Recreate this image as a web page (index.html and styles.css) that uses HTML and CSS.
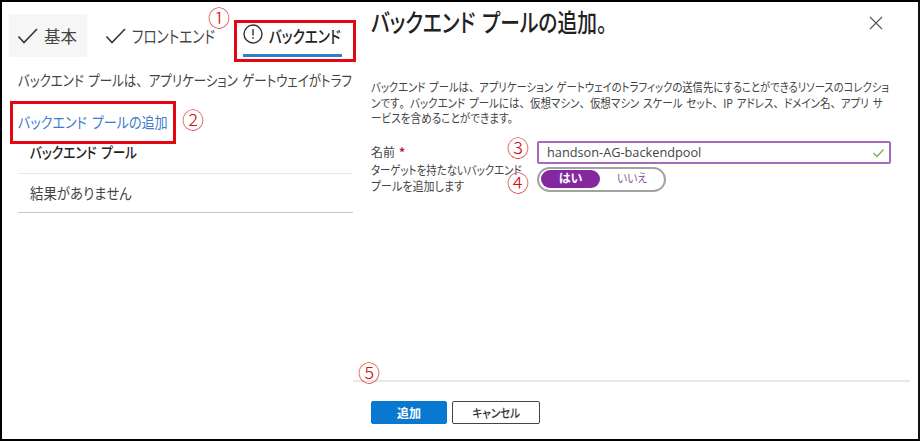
FILE: index.html
```html
<!DOCTYPE html>
<html lang="ja">
<head>
<meta charset="utf-8">
<title>バックエンド プールの追加</title>
<link rel="stylesheet" href="styles.css">
</head>
<body>
<main class="frame">
  <section class="wizard">
    <nav class="tabs">
      <a class="tab tab-basic"><svg class="tick" viewBox="0 0 22 18"><path d="M1.5 9.5 7 15.5 20 2"/></svg><span class="t t-basic">基本</span></a>
      <a class="tab tab-front"><svg class="tick" viewBox="0 0 22 18"><path d="M1.5 9.5 7 15.5 20 2"/></svg><span class="t t-front">フロントエンド</span></a>
      <a class="tab tab-back"><svg class="alert" viewBox="0 0 20 20"><circle cx="10" cy="10" r="9"/><path d="M10 5v6.5M10 13v1.8"/></svg><span class="t t-back">バックエンド</span></a>
    </nav>
    <p class="intro"><span class="t t-intro">バックエンド プールは<i>、</i>アプリケーション ゲートウェイがトラフ</span></p>
    <a class="add-link"><span class="t t-link">バックエンド プールの追加</span></a>
    <div class="row head"><span class="t t-head">バックエンド プール</span></div>
    <div class="row empty"><span class="t t-empty">結果がありません</span></div>
  </section>
  <section class="panel">
    <header class="panel-head">
      <h1><span class="t t-title">バックエンド プールの追加。</span></h1>
      <svg class="close" viewBox="0 0 14 14"><path d="M1 1 13 13M13 1 1 13"/></svg>
    </header>
    <div class="help">
      <div><span class="t t-h1">バックエンド プールは<i>、</i>アプリケーション ゲートウェイのトラフィックの送信先にすることができるリソースのコレクショ</span></div>
      <div><span class="t t-h2">ンです<i>。</i>バックエンド プールには<i>、</i>仮想マシン<i>、</i>仮想マシン スケール セット<i>、</i>IP アドレス<i>、</i>ドメイン名<i>、</i>アプリ サ</span></div>
      <div><span class="t t-h3">ービスを含めることができます。</span></div>
    </div>
    <div class="form">
      <div class="labels">
        <div class="name-label"><span class="t t-name">名前</span><b class="req">*</b></div>
        <div class="target-label"><div><span class="t t-l1">ターゲットを持たないバックエンド</span></div><div><span class="t t-l2">プールを追加します</span></div></div>
      </div>
      <div class="fields">
        <div class="input"><span class="t t-input">handson-AG-backendpool</span><svg class="valid" viewBox="0 0 12 10"><path d="M1 5 4.5 8.5 11 1.5"/></svg></div>
        <div class="toggle"><span class="on"><span class="t t-yes">はい</span></span><span class="off"><span class="t t-no">いいえ</span></span></div>
      </div>
    </div>
    <footer class="actions">
      <button class="primary"><span class="t t-add">追加</span></button>
      <button class="secondary"><span class="t t-cancel">キャンセル</span></button>
    </footer>
  </section>
  <div class="mark mark-tab"></div>
  <div class="mark mark-link"></div>
  <span class="num n1">①</span><span class="num n2">②</span><span class="num n3">③</span><span class="num n4">④</span><span class="num n5">⑤</span>
</main>
</body>
</html>
```
FILE: styles.css
```css
* { box-sizing: border-box; }
body { margin: 0; background: #fff; color: #444; font-family: "Noto Sans CJK JP", sans-serif; font-feature-settings: "palt"; }
.frame { position: relative; display: grid; grid-template-columns: 351px minmax(0, 1fr); width: 920px; height: 441px; border: 2px solid #000; border-right-color: #111; overflow: hidden; }
h1, p { margin: 0; font-weight: inherit; font-size: inherit; }
i { font-style: normal; font-feature-settings: normal; }
svg { display: block; fill: none; flex: none; }

/* Condensed text, one ratio per string */
.t { display: inline-block; white-space: pre; word-spacing: .14em; transform-origin: 0 50%; }
.t-basic { transform: scaleX(.97); }
.t-front { transform: scaleX(.8); }
.t-back { transform: scaleX(.8); }
.t-intro { transform: scaleX(.832); }
.t-link { transform: scaleX(.872); }
.t-head { transform: scaleX(.842); }
.t-empty { transform: scaleX(.895); }
.t-title { transform: scaleX(.79); }
.t-h1 { transform: scaleX(.861); }
.t-h2 { transform: scaleX(.874); }
.t-h3 { transform: scaleX(.885); }
.t-l1 { transform: scaleX(.868); }
.t-l2 { transform: scaleX(.92); }
.t-input { transform: scaleX(.98); }
.t-no { transform: scaleX(.9); }
.t-cancel { transform: scaleX(.88); transform-origin: 50% 50%; }

.wizard { overflow: hidden; padding: 12px 0 0 7px; }
.tabs { display: flex; height: 43px; font-size: 17px; line-height: 43px; }
.tab { display: flex; align-items: center; height: 43px; }
.tab-basic { width: 78px; padding-left: 8px; background: #f6f6f6; }
.tab-front { width: 138px; padding-left: 18px; }
.tab-back { width: 99px; height: 43px; border-bottom: 3px solid #2b7fcc; color: #222; margin-left: 18px; font-weight: 500; }
.tick { width: 22px; height: 18px; margin-right: 5px; stroke: #3b3a39; stroke-width: 1.7; }
.alert { width: 20px; height: 20px; margin-right: 6px; stroke: #333; stroke-width: 1.4; }
.t-back { padding-top: 2px; }
.intro { height: 26px; margin: 10px 0 0 9px; font-size: 15px; line-height: 26px; }
.add-link { display: block; height: 26px; margin: 16px 0 0 9px; font-size: 15px; line-height: 26px; color: #3d7dcb; }
.row { margin-left: 9px; padding-left: 12px; font-size: 15px; }
.head { height: 39px; line-height: 34px; border-bottom: 1px solid #e8e8e8; color: #222; font-weight: 500; }
.empty { height: 39px; line-height: 38px; border-bottom: 1px solid #c8c8c8; }

.panel { display: flex; flex-direction: column; padding-left: 18px; }
.panel-head { display: flex; justify-content: space-between; height: 77px; }
.panel-head h1 { font-size: 25px; line-height: 39px; font-weight: 500; color: #222; }
.close { width: 14px; height: 14px; margin: 14px 35px 0 0; stroke: #555; stroke-width: 1.1; }
.help { font-size: 12px; line-height: 15.5px; height: 62px; }
.form { display: flex; height: 239px; font-size: 12px; }
.labels { width: 166px; }
.name-label { display: flex; height: 21px; line-height: 22px; }
.req { color: #a4262c; margin-left: 4px; }
.target-label { line-height: 15.5px; }
.input { display: flex; align-items: center; justify-content: space-between; width: 354px; height: 23px; padding: 0 4px 2px 8px; border: 2px solid #a56bba; border-radius: 2px; font: 13px "Open Sans", sans-serif; }
.valid { width: 13px; height: 10px; stroke: #74b04c; stroke-width: 1.3; margin-top: 2px; }
.toggle { display: flex; width: 129px; height: 25px; margin-top: 3px; padding: 1px 2px; border: 2px solid #a3a3a3; border-radius: 13px; line-height: 16px; }
.on { width: 59px; height: 18px; border-radius: 9px; background: #8428a0; color: #fff; text-align: center; font-weight: 700; }
.off { padding-left: 17px; color: #8a5aa3; }
.actions { display: flex; gap: 5px; margin-left: -18px; margin-right: 8px; padding: 19px 0 0 18px; border-top: 2px solid #e8e8e8; }
button { display: block; height: 23px; padding: 0; border-radius: 2px; font: 500 12px/20px "Noto Sans CJK JP", sans-serif; font-feature-settings: "palt"; text-align: center; }
.primary { width: 76px; border: 1px solid #0878d0; background: #0878d0; color: #fff; font-weight: 700; }
.secondary { width: 88px; border: 1px solid #444; background: #fff; color: #333; }

.mark { position: absolute; border: 3px solid #e30613; }
.mark-tab { left: 232px; top: 18px; width: 122px; height: 42px; }
.mark-link { left: 8px; top: 99px; width: 166px; height: 43px; }
.num { position: absolute; color: #d40f14; font-size: 22px; line-height: 24px; font-feature-settings: normal; font-weight: 300; }
.n1 { left: 206px; top: 2px; }
.n2 { left: 180px; top: 104px; }
.n3 { left: 505px; top: 132px; }
.n4 { left: 505px; top: 167px; }
.n5 { left: 356px; top: 357px; }
```
